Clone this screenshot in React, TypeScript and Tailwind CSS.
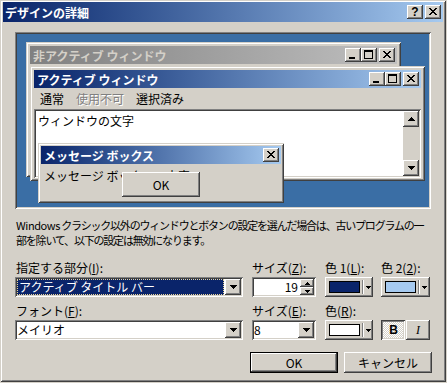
import React from "react";

// classic 3D edges
const raised =
  "bg-[#d4d0c8] shadow-[inset_-1px_-1px_#404040,inset_1px_1px_#fff,inset_-2px_-2px_#808080,inset_2px_2px_#d4d0c8]";
const sunken =
  "shadow-[inset_1px_1px_#808080,inset_-1px_-1px_#fff,inset_2px_2px_#404040,inset_-2px_-2px_#d4d0c8]";
const frame =
  "bg-[#d4d0c8] shadow-[inset_1px_1px_#d4d0c8,inset_-1px_-1px_#404040,inset_2px_2px_#fff,inset_-2px_-2px_#808080]";

const CLOSE = ["##....##", ".##..##.", "..####..", "...##...", "..####..", ".##..##.", "##....##"];
const MIN = ["######", "######"];
const MAX = ["#########", "#########", "#.......#", "#.......#", "#.......#", "#.......#", "#.......#", "#.......#", "#########"];
const DOWN = ["#######", ".#####.", "..###..", "...#..."];
const UP = ["...#...", "..###..", ".#####.", "#######"];
const SDOWN = ["#####", ".###.", "..#.."];
const SUP = ["..#..", ".###.", "#####"];

const Pix = ({ rows }: { rows: string[] }) => (
  <svg width={rows[0].length} height={rows.length} shapeRendering="crispEdges" className="block">
    {rows.flatMap((r, y) =>
      r.split("").map((c, x) => (c === "#" ? <rect key={`${x}-${y}`} x={x} y={y} width={1} height={1} fill="#000" /> : null))
    )}
  </svg>
);

const CapBtn = ({ kind }: { kind: "min" | "max" | "close" | "help" }) => {
  if (kind === "min")
    return (
      <div className={`w-[16px] h-[14px] flex items-end pl-[4px] pb-[3px] ${raised}`}>
        <Pix rows={MIN} />
      </div>
    );
  if (kind === "max")
    return (
      <div className={`w-[16px] h-[14px] flex pl-[3px] pt-[2px] ${raised}`}>
        <Pix rows={MAX} />
      </div>
    );
  if (kind === "help")
    return (
      <div className={`w-[16px] h-[14px] flex items-center justify-center font-bold text-[12px] leading-[14px] font-['Liberation_Sans',sans-serif] ${raised}`}>
        ?
      </div>
    );
  return (
    <div className={`w-[16px] h-[14px] flex pl-[4px] pt-[3px] ${raised}`}>
      <Pix rows={CLOSE} />
    </div>
  );
};

const Caption = (props: { title: string; active: boolean; closeOnly?: boolean }) => (
  <div
    className={`h-[18px] flex items-center pl-[3px] pr-[2px] ${
      props.active ? "bg-linear-to-r from-[#0a246a] to-[#a6caf0]" : "bg-linear-to-r from-[#808080] to-[#c0c0c0]"
    }`}
  >
    <span className={`flex-1 font-bold whitespace-nowrap ${props.active ? "text-white" : "text-[#d4d0c8]"}`}>{props.title}</span>
    {!props.closeOnly && <CapBtn kind="min" />}
    {!props.closeOnly && <CapBtn kind="max" />}
    <div className="ml-[2px]">
      <CapBtn kind="close" />
    </div>
  </div>
);

const DropBtn = () => (
  <div className={`w-[16px] h-[16px] flex items-center justify-center ${raised}`}>
    <Pix rows={DOWN} />
  </div>
);

const ColorBtn = (props: { swatch: string }) => (
  <div className={`h-[20px] flex items-center pl-[4px] ${raised}`}>
    <div className={`w-[31px] h-[12px] border border-black ${props.swatch}`} />
    <div className="ml-[2px] w-[2px] h-[14px] border-l border-l-[#808080] border-r border-r-white" />
    <div className="ml-[2px]">
      <Pix rows={SDOWN} />
    </div>
  </div>
);

const Preview = () => (
  <div className={`relative w-[416px] h-[177px] bg-[#3a6ea5] ${sunken}`}>
    {/* inactive window */}
    <div className={`absolute left-[11px] top-[10px] w-[375px] h-[135px] p-[4px] ${frame}`}>
      <Caption title="非アクティブ ウィンドウ" active={false} />
    </div>

    {/* active window */}
    <div className={`absolute left-[15px] top-[34px] w-[395px] h-[115px] px-[4px] pt-[4px] pb-[3px] flex flex-col ${frame}`}>
      <Caption title="アクティブ ウィンドウ" active />
      <div className="h-[21px] flex items-center pl-[6px] gap-[12px] whitespace-nowrap">
        <span>通常</span>
        <span className="text-[#808080] [text-shadow:1px_1px_#fff]">使用不可</span>
        <span>選択済み</span>
      </div>
      <div className={`flex-1 p-[2px] flex bg-white ${sunken}`}>
        <div className="flex-1 pl-[2px] pt-[2px]">ウィンドウの文字</div>
        <div className="w-[16px] flex flex-col justify-between bg-[#d4d0c8]">
          <div className={`h-[16px] flex items-center justify-center ${raised}`}>
            <Pix rows={UP} />
          </div>
          <div className={`h-[16px] flex items-center justify-center ${raised}`}>
            <Pix rows={DOWN} />
          </div>
        </div>
      </div>
    </div>

    {/* message box */}
    <div className={`absolute left-[23px] top-[111px] w-[246px] h-[60px] p-[3px] ${frame}`}>
      <Caption title="メッセージ ボックス" active closeOnly />
      <div className="pl-[3px] pt-[4px] whitespace-nowrap">メッセージ ボックスの文字</div>
      <div className={`absolute left-[84px] top-[29px] w-[78px] h-[25px] flex items-center justify-center ${raised}`}>OK</div>
    </div>
  </div>
);

export default function App() {
  return (
    <div className="w-[447px] h-[383px] bg-[#d4d0c8] overflow-hidden text-[12px] leading-[15px] text-black font-['Noto_Sans_CJK_JP',sans-serif] font-features-['palt']">
      <div className={`w-[446px] h-[382px] pt-[2px] px-[3px] flex flex-col ${frame}`}>
        {/* title bar */}
        <div className="h-[20px] flex items-center pl-[2px] pr-[2px] bg-linear-to-r from-[#0a246a] to-[#a6caf0]">
          <span className="flex-1 font-bold text-white">デザインの詳細</span>
          <CapBtn kind="help" />
          <div className="ml-[2px]">
            <CapBtn kind="close" />
          </div>
        </div>

        <div className="pl-[12px] pt-[10px]">
          <Preview />

          <div className="mt-[9px] pl-[1px] whitespace-nowrap text-[11px] tracking-[-1.2px]">
            <div>
              <span className="tracking-[-0.4px]">Windows</span> クラシック以外のウィンドウとボタンの設定を選んだ場合は、古いプログラムの一
            </div>
            <div>部を除いて、以下の設定は無効になります。</div>
          </div>

          {/* row 1 */}
          <div className="mt-[12px] flex whitespace-nowrap">
            <div className="w-[228px]">
              <div className="pl-[1px]">
                指定する部分(<span className="underline">I</span>):
              </div>
              <div className={`mt-[2px] h-[20px] p-[2px] flex bg-white ${sunken}`}>
                <div className="flex-1 mr-[1px] bg-[#0a246a] text-white border border-dotted border-[#e8d49a] pl-[1px] leading-[14px]">
                  アクティブ タイトル バー
                </div>
                <DropBtn />
              </div>
            </div>
            <div className="w-[64px] ml-[9px]">
              <div>
                サイズ(<span className="underline">Z</span>):
              </div>
              <div className={`mt-[2px] h-[20px] p-[2px] flex bg-white ${sunken}`}>
                <div className="flex-1 text-right pr-[2px] leading-[16px]">19</div>
                <div className="w-[14px] flex flex-col">
                  <div className={`flex-1 flex items-center justify-center ${raised}`}>
                    <Pix rows={SUP} />
                  </div>
                  <div className={`flex-1 flex items-center justify-center ${raised}`}>
                    <Pix rows={SDOWN} />
                  </div>
                </div>
              </div>
            </div>
            <div className="w-[48px] ml-[9px]">
              <div>
                色 1(<span className="underline">L</span>):
              </div>
              <div className="mt-[2px]">
                <ColorBtn swatch="bg-[#0a246a]" />
              </div>
            </div>
            <div className="w-[49px] ml-[8px]">
              <div>
                色 2(<span className="underline">2</span>):
              </div>
              <div className="mt-[2px]">
                <ColorBtn swatch="bg-[#a6caf0]" />
              </div>
            </div>
          </div>

          {/* row 2 */}
          <div className="mt-[6px] flex whitespace-nowrap">
            <div className="w-[228px]">
              <div className="pl-[1px]">
                フォント(<span className="underline">F</span>):
              </div>
              <div className={`mt-[2px] h-[20px] p-[2px] flex bg-white ${sunken}`}>
                <div className="flex-1 leading-[16px]">メイリオ</div>
                <DropBtn />
              </div>
            </div>
            <div className="w-[64px] ml-[9px]">
              <div>
                サイズ(<span className="underline">E</span>):
              </div>
              <div className={`mt-[2px] h-[20px] p-[2px] flex bg-white ${sunken}`}>
                <div className="flex-1 leading-[16px]">8</div>
                <DropBtn />
              </div>
            </div>
            <div className="w-[48px] ml-[9px]">
              <div>
                色(<span className="underline">R</span>):
              </div>
              <div className="mt-[2px]">
                <ColorBtn swatch="bg-white" />
              </div>
            </div>
            <div className="w-[49px] ml-[8px] pt-[17px] flex">
              <div className="w-[24px] h-[20px] flex items-center justify-center pl-[1px] pt-[1px] font-bold font-['Liberation_Sans',sans-serif] bg-[repeating-conic-gradient(#fff_0_25%,#d4d0c8_0_50%)] bg-[length:2px_2px] shadow-[inset_1px_1px_#404040,inset_-1px_-1px_#fff,inset_2px_2px_#808080,inset_-2px_-2px_#d4d0c8]">
                B
              </div>
              <div className={`w-[24px] h-[20px] ml-[1px] flex items-center justify-center italic font-['Liberation_Serif',serif] ${raised}`}>
                I
              </div>
            </div>
          </div>

          {/* dialog buttons */}
          <div className="mt-[12px] w-[417px] flex justify-end gap-[6px]">
            <div className="w-[88px] h-[21px] flex items-center justify-center bg-[#d4d0c8] shadow-[inset_0_0_0_1px_#000,inset_-2px_-2px_#404040,inset_2px_2px_#fff,inset_-3px_-3px_#808080]">
              OK
            </div>
            <div className={`w-[88px] h-[21px] flex items-center justify-center ${raised}`}>キャンセル</div>
          </div>
        </div>
      </div>
    </div>
  );
}
